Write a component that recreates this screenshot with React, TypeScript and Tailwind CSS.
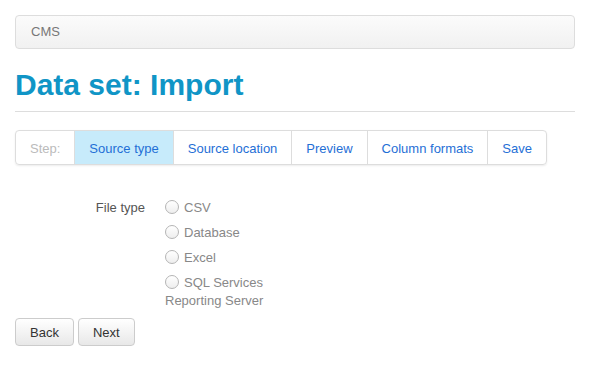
const steps = ['Source type', 'Source location', 'Preview', 'Column formats', 'Save']
const fileTypes = ['CSV', 'Database', 'Excel', 'SQL Services Reporting Server']

export default function App() {
  return (
    <main className="min-h-screen w-[590px] bg-white p-[15px] font-['Liberation_Sans',Arial,sans-serif] text-[13px]">
      {/* Breadcrumb bar */}
      <div className="flex h-[34px] items-center rounded-[4px] border border-[#dddddd] bg-gradient-to-b from-[#fbfbfb] to-[#f1f1f1] px-[15px] text-[#777777]">
        CMS
      </div>

      {/* Title */}
      <h1 className="mt-[18px] border-b border-[#dddddd] pb-[8px] text-[30px] font-bold leading-[36px] text-[#1095c6]">
        Data set: Import
      </h1>

      {/* Wizard steps */}
      <div className="mt-[18px] inline-flex h-[35px] overflow-hidden rounded-[4px] border border-[#dddddd] shadow-[0_1px_2px_rgba(0,0,0,0.08)]">
        <div className="flex items-center px-[14px] pt-[2px] text-[#bbbbbb]">Step:</div>
        {steps.map((s, i) => (
          <div
            key={s}
            className={
              i === 0
                ? 'flex items-center border-l border-[#dddddd] bg-[#c7ebfb] px-[14px] pt-[2px] text-[#1f6fd6]'
                : 'flex items-center border-l border-[#dddddd] px-[14px] pt-[2px] text-[#1f6fd6]'
            }
          >
            {s}
          </div>
        ))}
      </div>

      {/* Form */}
      <div className="mt-[34px] flex">
        <div className="w-[130px] text-right leading-[18px] text-[#555555]">File type</div>
        <div className="ml-[20px] flex w-[120px] flex-col gap-[7px] text-[#888888]">
          {fileTypes.map((t) => (
            <label key={t} className="leading-[18px]">
              <span className="mr-[5px] inline-block h-[14px] w-[14px] rounded-full border border-[#b5b5b5] bg-gradient-to-b from-white to-[#eeeeee] align-[-2px]" />
              {t}
            </label>
          ))}
        </div>
      </div>

      {/* Buttons */}
      <div className="mt-[8px] flex gap-[4px]">
        <button className="h-[28px] rounded-[4px] border border-[#cccccc] bg-gradient-to-b from-white to-[#e8e8e8] px-[14px] pt-[2px] text-[#333333]">
          Back
        </button>
        <button className="h-[28px] rounded-[4px] border border-[#cccccc] bg-gradient-to-b from-white to-[#e8e8e8] px-[14px] pt-[2px] text-[#333333]">
          Next
        </button>
      </div>
    </main>
  )
}
